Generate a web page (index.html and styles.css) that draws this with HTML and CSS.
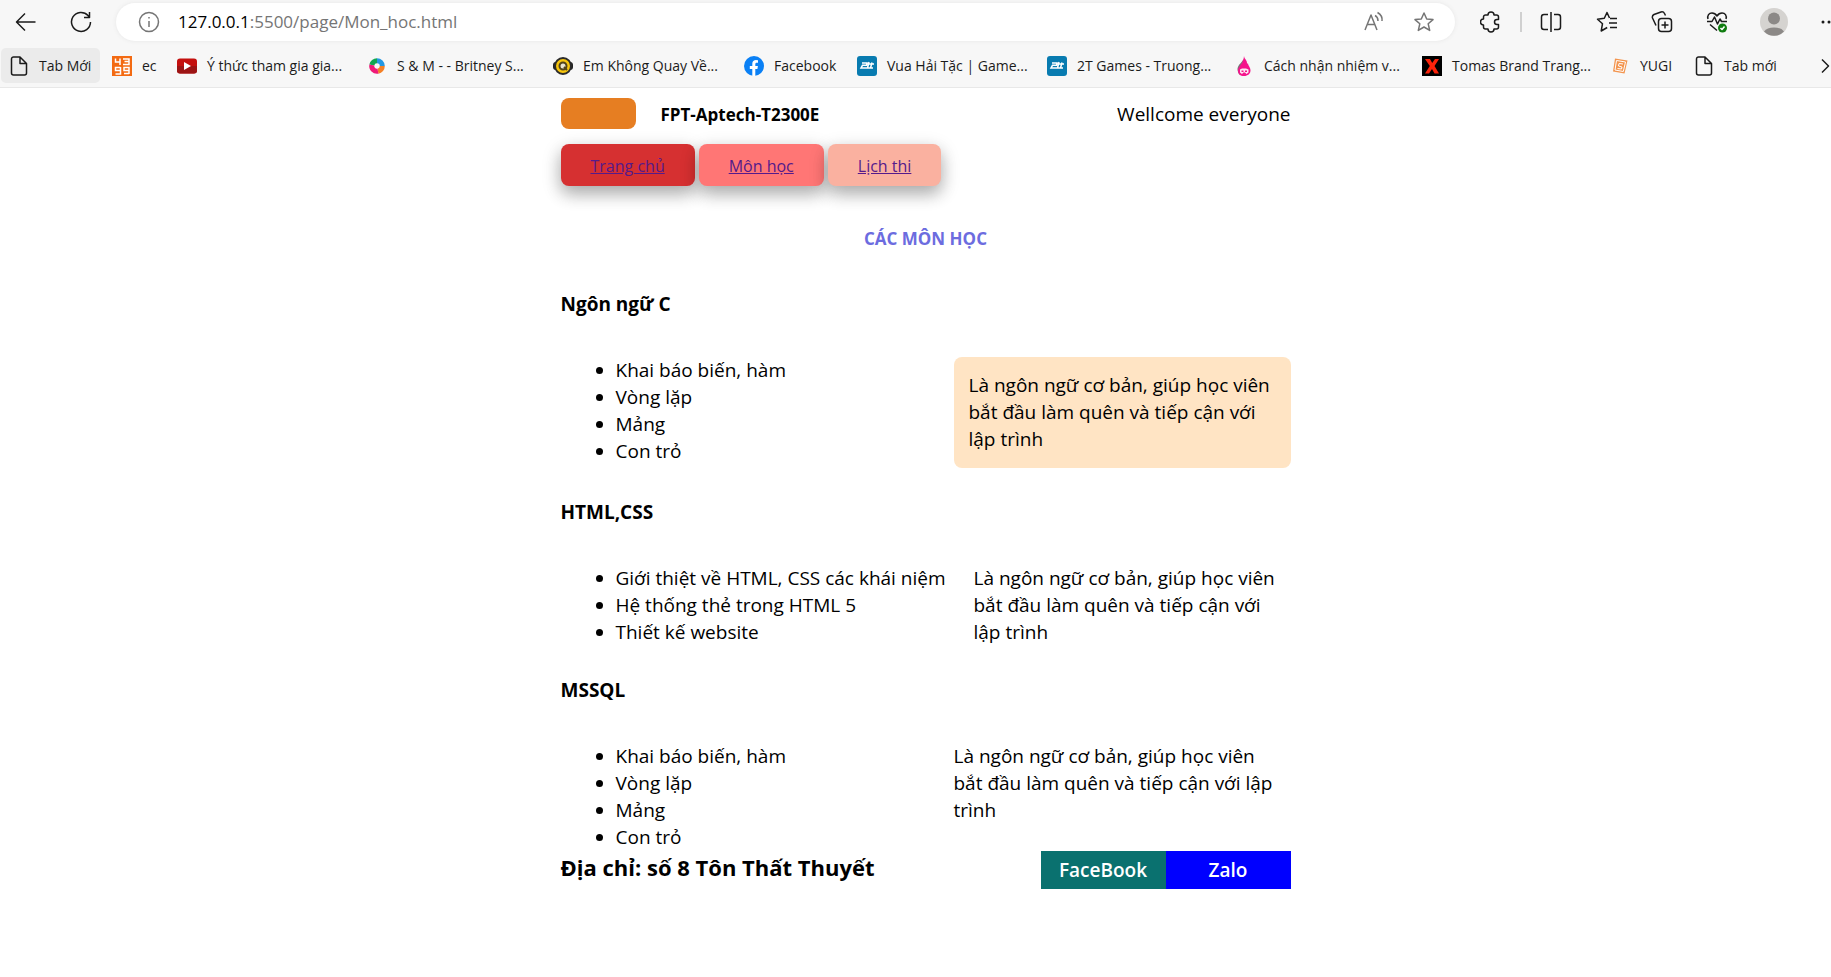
FILE: index.html
```html
<!DOCTYPE html>
<html lang="vi">
<head>
<meta charset="utf-8">
<title>Môn học</title>
<link rel="stylesheet" href="styles.css">
</head>
<body>
<header class="browser">
  <div class="toolbar">
    <button class="tool back" aria-label="Back"><svg width="22" height="22" viewBox="0 0 22 22"><path d="M20.500 11H1.500M10 2.500L1.500 11l8.500 8.500"/></svg></button>
    <button class="tool reload" aria-label="Reload"><svg width="22" height="22" viewBox="0 0 22 22"><path d="M20.500 11a9.500 9.500 0 1 1-2.500-6.500L19.500 6.500M19.500 1v5.500H14"/></svg></button>
    <form class="address">
      <svg class="info" width="22" height="22" viewBox="0 0 22 22"><circle cx="11" cy="11" r="9.500"/><path d="M11 10v6M11 6v1.500"/></svg>
      <label class="host" for="url">127.0.0.1</label>
      <input class="path" id="url" type="text" value=":5500/page/Mon_hoc.html">
      <button class="tool read" type="button" aria-label="Read aloud"><svg width="22" height="22" viewBox="0 0 22 22"><path d="M2 19L8 4l6 15M4.200 13.500h7.600M12 4.500c2 1 3 3 3 5.500M14.500 1.500c3.500 2 5 5 4.500 8.500"/></svg></button>
      <button class="tool fav" type="button" aria-label="Add to favorites"><svg width="22" height="22" viewBox="0 0 22 22"><path d="M11 2l2.700 6 6.300.6-4.800 4.200 1.500 6.600L11 16l-5.700 3.400 1.500-6.600L2 8.600 8.300 8z"/></svg></button>
    </form>
    <div class="tools">
      <button class="tool" aria-label="Extensions"><svg width="22" height="22" viewBox="0 0 22 22"><path d="M5.500 4H8a3 3 0 0 1 6 0h2.500a2 2 0 0 1 2 2v2.500H17a2.500 2.500 0 0 0 0 5h1.500V16a2 2 0 0 1-2 2H14a3 3 0 0 1-6 0H5.500a2 2 0 0 1-2-2v-2a3 3 0 0 1 0-6V6a2 2 0 0 1 2-2z"/></svg></button>
      <span class="rule"></span>
      <button class="tool" aria-label="Split screen"><svg width="22" height="22" viewBox="0 0 22 22"><path d="M8 3.500H4A2.500 2.500 0 0 0 1.500 6v10A2.500 2.500 0 0 0 4 18.500h4M14 3.500h4A2.500 2.500 0 0 1 20.500 6v10a2.500 2.500 0 0 1-2.500 2.500h-4M11 1v20"/></svg></button>
      <button class="tool" aria-label="Favorites"><svg width="22" height="22" viewBox="0 0 22 22"><path d="M13.500 7L11 1.500 8.300 7.300 1.500 8.200l5 4.500-1.300 7.300 6-3.500M14 7.500h7M13 12h8M14 16.500h7"/></svg></button>
      <button class="tool" aria-label="Collections"><svg width="22" height="22" viewBox="0 0 22 22"><rect x="7.500" y="7.500" width="13" height="13" rx="3"/><path d="M14 10.500v7M10.500 14h7M5 14.500L1.500 7A3 3 0 0 1 3 3.500l7-2.500a3 3 0 0 1 3.500 1.500l1 2"/></svg></button>
      <button class="tool" aria-label="Browser essentials"><svg width="22" height="22" viewBox="0 0 22 22"><path d="M2 8C1 4.500 3 2 6 2c2.500 0 4 1.500 5 3 1-1.500 2.500-3 5-3 3 0 5 2.500 4 6M1 10.500h5L8.500 6l3 7 2.500-5 1.500 2.500H21M4 13.500l7 6"/><circle cx="16.500" cy="17" r="4.500" class="ok"/><path class="check" d="M14.500 17l1.500 1.500 2.500-3"/></svg></button>
      <button class="tool profile" aria-label="Profile"><svg width="28" height="28" viewBox="0 0 28 28"><circle class="disc" cx="14" cy="14" r="14"/><circle class="person" cx="14" cy="10.500" r="6"/><path class="person" d="M4 23.500a11 7 0 0 1 20 0 14 14 0 0 1-20 0z"/></svg></button>
      <button class="tool more" aria-label="More"><svg width="22" height="22" viewBox="0 0 22 22"><circle cx="5" cy="11" r="1.500"/><circle cx="11" cy="11" r="1.500"/><circle cx="17" cy="11" r="1.500"/></svg></button>
    </div>
  </div>
  <nav class="bookmarks" aria-label="Bookmarks">
    <a class="mark current" href="#"><svg width="20" height="20" viewBox="0 0 20 20"><path class="page" d="M11 1H4.500A2 2 0 0 0 2.500 3v14a2 2 0 0 0 2 2h11a2 2 0 0 0 2-2V7.500zV7.500h6.500"/></svg>Tab Mới</a>
    <a class="mark" href="#"><svg width="20" height="20" viewBox="0 0 20 20"><path fill="#f36a12" d="M0 0h20v20H0z"/><path class="tile" d="M3.500 2.500v3.500H8M8 2.500V9M11 3h6v5.500h-6M12.500 5.500H17M8.500 11.500h-5v3h5v3.500h-5M8.500 11v7M17 18v-6.500h-5v3h5M17 17.500h-5"/></svg>ec</a>
    <a class="mark" href="#"><svg width="20" height="20" viewBox="0 0 20 20"><rect y="2.500" width="20" height="15" rx="3" fill="#c4100e"/><path d="M0 10h20v4.500a3 3 0 0 1-3 3H3a3 3 0 0 1-3-3z" fill="#9c1414"/><path d="M7 6l7 4-7 4z" fill="#fff"/></svg>Ý thức tham gia gia...</a>
    <a class="mark" href="#"><svg width="20" height="20" viewBox="0 0 20 20"><g class="ring"><path stroke="#12a650" d="M4.800 9A5.300 5.300 0 0 1 10 4.700"/><path stroke="#2498e3" d="M10 4.700A5.300 5.300 0 0 1 15.300 10"/><path stroke="#f58026" d="M15.300 10A5.300 5.300 0 0 1 11 15.200"/><path stroke="#ef1a78" d="M11 15.200A5.300 5.300 0 0 1 4.800 9"/></g></svg>S &amp; M - - Britney S...</a>
    <a class="mark" href="#"><svg width="20" height="20" viewBox="0 0 20 20"><rect y="6" width="20" height="8" rx="3" fill="#222"/><circle cx="10" cy="10" r="8" fill="#f7c50c" stroke="#2b2b2b" stroke-width="2"/><circle cx="10" cy="10" r="3.500" fill="#e9e4d0" stroke="#51431a" stroke-width="2"/><path d="M11 11l3 3" stroke="#51431a" stroke-width="2"/></svg>Em Không Quay Về...</a>
    <a class="mark" href="#"><svg width="20" height="20" viewBox="0 0 20 20"><circle cx="10" cy="10" r="10" fill="#0a80f5"/><path fill="#fff" d="M8.300 20v-7H5.800v-3h2.500V7.800C8.300 5.200 9.800 4 12 4l2 .2v2.500h-1.200c-1.200 0-1.500.7-1.500 1.500V10h2.600l-.5 3h-2.100v7z"/></svg>Facebook</a>
    <a class="mark" href="#"><svg width="20" height="20" viewBox="0 0 20 20"><rect width="20" height="20" rx="3" fill="#087bb0"/><path class="two" d="M5 7h5L9.500 9.300H5.500L4 12h6M12 6l-1.500 6H13M10.500 8H17M15 6.500L13.500 12H16"/></svg>Vua Hải Tặc | Game...</a>
    <a class="mark" href="#"><svg width="20" height="20" viewBox="0 0 20 20"><rect width="20" height="20" rx="3" fill="#087bb0"/><path class="two" d="M5 7h5L9.500 9.300H5.500L4 12h6M12 6l-1.500 6H13M10.500 8H17M15 6.500L13.500 12H16"/></svg>2T Games - Truong...</a>
    <a class="mark" href="#"><svg width="20" height="20" viewBox="0 0 20 20"><path fill="#777" d="M10 1c0 5-7 7-6.500 13 .5 3 2 5 3 5z"/><path fill="#f5148c" d="M10 0c.5 3.500 3.500 4 3 8l1-1c0 3 2.500 4 2.500 7.500 0 3-2.500 5.500-6.500 5.500s-6-2-6-5.500c0-3.500 3-4.500 3-7.500l1 1c0-3 2-4.500 2-8z"/><path fill="#fde8f3" d="M6 13.500l2-1h4l2.500 1v3l-2 1.500-1.500-1.500H9.500L8 18l-2-1.500z"/><path fill="#f5148c" d="M7.500 14.500h2V16h-2zM11 14.500h2V16h-2z"/></svg>Cách nhận nhiệm v...</a>
    <a class="mark" href="#"><svg width="20" height="20" viewBox="0 0 20 20"><path d="M0 0h20v20H0z"/><path fill="#fb230b" d="M3 3h5l2.200 4L13 3h4l-4.500 7 4.500 7.500h-4.500L10 13l-3 4.500H3L7.800 10z"/></svg>Tomas Brand Trang...</a>
    <a class="mark" href="#"><svg width="20" height="20" viewBox="0 0 20 20"><path fill="#f3954f" d="M5 2.500l12.500 2L14.500 17.500 3 15.500z"/><path class="yugi" d="M6.500 4.500l9 1.500-2.200 9.500-8.300-1.500zM13 8l-4-.5-.5 2.500 3.500 1-.5 2-4-.5"/></svg>YUGI</a>
    <a class="mark" href="#"><svg width="20" height="20" viewBox="0 0 20 20"><path class="page" d="M11 1H4.500A2 2 0 0 0 2.500 3v14a2 2 0 0 0 2 2h11a2 2 0 0 0 2-2V7.500zV7.500h6.500"/></svg>Tab mới</a>
    <button class="tool overflow" aria-label="More bookmarks"><svg width="11" height="16" viewBox="0 0 11 16"><path d="M2 1.500L8.500 8 2 14.500"/></svg></button>
  </nav>
</header>

<main class="container">
  <header class="masthead">
    <span class="logo"></span>
    <strong class="class-name">FPT-Aptech-T2300E</strong>
    <span class="welcome">Wellcome everyone</span>
  </header>
  <nav class="menu">
    <a class="menu-link home" href="#">Trang chủ</a>
    <a class="menu-link subjects" href="#">Môn học</a>
    <a class="menu-link exams" href="#">Lịch thi</a>
  </nav>
  <h1 class="title">CÁC MÔN HỌC</h1>

  <section class="subject">
    <h2 class="subject-name">Ngôn ngữ C</h2>
    <div class="subject-body">
      <ul class="topics"><li>Khai báo biến, hàm</li><li>Vòng lặp</li><li>Mảng</li><li>Con trỏ</li></ul>
      <p class="note boxed">Là ngôn ngữ cơ bản, giúp học viên bắt đầu làm quên và tiếp cận với lập trình</p>
    </div>
  </section>
  <section class="subject">
    <h2 class="subject-name">HTML,CSS</h2>
    <div class="subject-body">
      <ul class="topics"><li>Giới thiệt về HTML, CSS các khái niệm</li><li>Hệ thống thẻ trong HTML 5</li><li>Thiết kế website</li></ul>
      <p class="note indented">Là ngôn ngữ cơ bản, giúp học viên bắt đầu làm quên và tiếp cận với lập trình</p>
    </div>
  </section>
  <section class="subject">
    <h2 class="subject-name">MSSQL</h2>
    <div class="subject-body">
      <ul class="topics"><li>Khai báo biến, hàm</li><li>Vòng lặp</li><li>Mảng</li><li>Con trỏ</li></ul>
      <p class="note">Là ngôn ngữ cơ bản, giúp học viên bắt đầu làm quên và tiếp cận với lập trình</p>
    </div>
  </section>

  <footer class="footer">
    <h2 class="location">Địa chỉ: số 8 Tôn Thất Thuyết</h2>
    <button class="social facebook">FaceBook</button>
    <button class="social zalo">Zalo</button>
  </footer>
</main>
</body>
</html>
```
FILE: styles.css
```css
* { box-sizing: border-box; }

body {
  margin: 0;
  background: #fff;
  color: #000;
  font-family: "Open Sans", "Noto Sans", sans-serif;
  font-size: 19px;
  line-height: 27px;
  overflow-x: hidden;
}

h1, h2, p, ul { margin: 0; }
button { border: 0; padding: 0; font: inherit; }
svg { display: block; flex: none; }

/* Browser bars */
.browser {
  background: #f7f7f7;
  border-bottom: 1px solid #e8e8e8;
  overflow: hidden;
}
.toolbar {
  display: flex;
  align-items: center;
  height: 44px;
  padding-left: 15px;
}
.tool {
  flex: none;
  background: none;
  display: block;
}
.tool svg, .info {
  fill: none;
  stroke: #1b1b1b;
  stroke-width: 1.5;
  stroke-linejoin: round;
}
.reload { margin-left: 33px; }
.address {
  flex: 1;
  display: flex;
  align-items: center;
  height: 38px;
  margin-left: 24px;
  padding: 0 20px 0 22px;
  border-radius: 19px;
  background: #fff;
  box-shadow: 0 0 4px #e6e6e6;
  font-size: 17px;
  line-height: 24px;
}
.address svg { stroke: #757575; }
.host { margin-left: 18px; }
.path {
  flex: 1;
  min-width: 0;
  border: 0;
  padding: 0;
  outline: 0;
  background: none;
  color: #757575;
  font: inherit;
}
.fav { margin-left: 28px; }
.tools {
  flex: none;
  display: grid;
  grid-template-columns: 30px 30px 56px 55px 55px 54px 58px 38px;
  align-items: center;
  width: 376px;
  padding-left: 25px;
}
.rule {
  width: 2px;
  height: 20px;
  margin-left: 10px;
  background: #d0d0d0;
}
.tool .ok { fill: #107c10; stroke: none; }
.tool .check { stroke: #fff; }
.tool .disc { fill: #d5d3d0; stroke: none; }
.tool .person { fill: #8c8987; stroke: none; }
.more circle { fill: #1b1b1b; stroke: none; }

.bookmarks {
  display: grid;
  grid-template-columns: 102px 65px 190px 186px 191px 113px 190px 187px 188px 188px 84px 102px 1fr;
  align-items: center;
  height: 43px;
  font-size: 14px;
}
.mark {
  display: flex;
  align-items: center;
  gap: 10px;
  height: 35px;
  padding-left: 10px;
  color: #1b1b1b;
  text-decoration: none;
  white-space: nowrap;
}
.current {
  margin: 0 2px 0 1px;
  padding-left: 8px;
  border-radius: 5px;
  background: #ebebeb;
}
.page { fill: none; stroke: #1b1b1b; stroke-width: 1.5; stroke-linejoin: round; }
.tile { fill: none; stroke: #fff; stroke-width: 1.5; }
.two { fill: none; stroke: #fff; stroke-width: 1.5; }
.ring { fill: none; stroke-width: 5; }
.yugi { fill: none; stroke: #fff; stroke-width: 1; }
.overflow { justify-self: end; }

/* Page */
.container {
  max-width: 750px;
  margin: 0 auto;
  padding: 10px 0 0 20px;
}
.masthead {
  display: flex;
  align-items: flex-start;
  height: 46px;
}
.logo {
  width: 75px;
  height: 31px;
  border-radius: 8px;
  background: #e67e22;
}
.class-name {
  margin-left: 25px;
  padding-top: 3px;
  font-size: 17px;
}
.welcome {
  margin-left: auto;
  padding-top: 3px;
}
.menu {
  display: flex;
  gap: 4px;
}
.menu-link {
  height: 42px;
  padding: 0 30px;
  border-radius: 8px;
  color: #551a8b;
  font-size: 16px;
  line-height: 44px;
  box-shadow: 0 8px 16px rgba(0, 0, 0, .2), 0 6px 20px rgba(0, 0, 0, .19);
}
.home { background: #d63031; }
.subjects { background: #ff7675; }
.exams { background: #fab1a0; }
.title {
  margin: 39px 0;
  color: #6c6cdf;
  font-size: 17px;
  line-height: 27px;
  text-align: center;
}
.subject + .subject { margin-top: 31px; }
.subject-name {
  margin-bottom: 39px;
  font-size: 19px;
  line-height: 27px;
}
.subject-body {
  display: flex;
  justify-content: space-between;
}
.topics {
  padding-left: 55px;
  white-space: nowrap;
}
.note {
  width: 337px;
  padding-right: 10px;
}
.boxed {
  padding: 15px;
  border-radius: 8px;
  background: #ffe4c4;
}
.indented { padding-left: 20px; }
.footer {
  display: flex;
  align-items: flex-start;
}
.location {
  margin-right: auto;
  font-size: 22px;
  line-height: 33px;
}
.social {
  width: 125px;
  height: 38px;
  color: #fff;
  font-weight: 600;
}
.facebook { background: #0a716f; }
.zalo { background: #00f; }
```
